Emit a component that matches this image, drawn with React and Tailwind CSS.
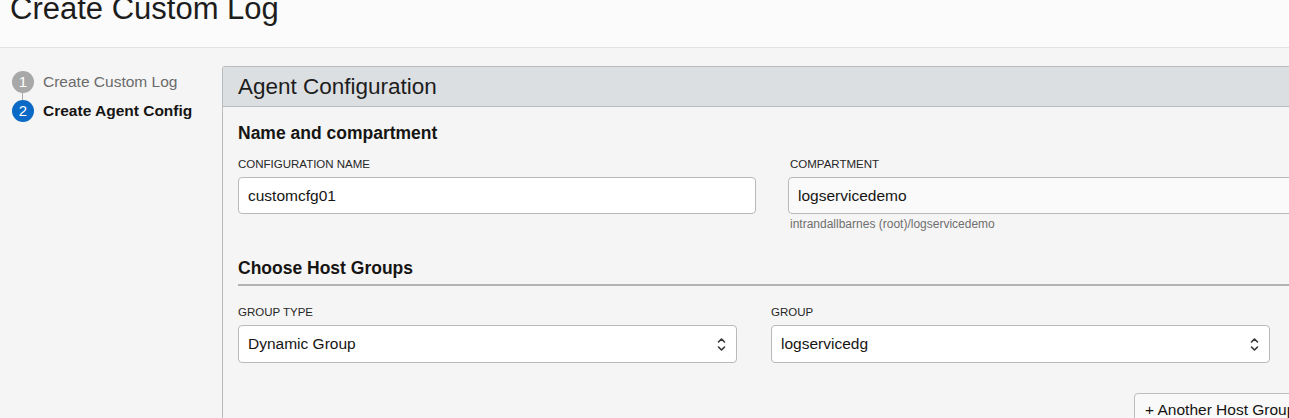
import React from 'react';

const Chevrons = () => (
  <svg width="9" height="15" viewBox="0 0 9 15" fill="none" stroke="#333" strokeWidth="1.6" strokeLinecap="round" strokeLinejoin="round">
    <path d="M1.5 5 L4.5 2 L7.5 5" />
    <path d="M1.5 10 L4.5 13 L7.5 10" />
  </svg>
);

const Label = ({ children }) => (
  <div className="text-[11.5px] leading-[14px] text-[#262626] uppercase mb-[6px]">{children}</div>
);

const Select = ({ value }) => (
  <div className="h-[38px] bg-white border border-[#b9b9b9] rounded-[4px] flex items-center justify-between pl-[9px] pr-[10px] text-[15.5px] text-[#161513]">
    <span>{value}</span>
    <Chevrons />
  </div>
);

const App = () => {
  const steps = [
    { n: 1, label: 'Create Custom Log', active: false },
    { n: 2, label: 'Create Agent Config', active: true },
  ];

  return (
    <div className="w-full h-[418px] overflow-hidden bg-[#f5f5f5] text-[#161513]" style={{ fontFamily: '"Liberation Sans", Arial, sans-serif' }}>
      {/* page header */}
      <div className="h-[48px] bg-[#fbfbfb] border-b border-[#e2e2e2] overflow-hidden">
        <h1 className="mt-[-7px] pl-[10px] text-[31px] leading-[31px] text-[#1d1d1d]">Create Custom Log</h1>
      </div>

      <div className="flex">
        {/* steps */}
        <div className="w-[222px] shrink-0 pt-[23px] pl-[12px]">
          {steps.map((s, i) => (
            <div key={s.n}>
              {i > 0 && <div className="ml-[10px] w-px h-[7px] bg-[#a9a9a9]"></div>}
              <div className="flex items-center gap-[9px] h-[22px]">
                <div
                  className={`w-[22px] h-[22px] rounded-full flex items-center justify-center text-white text-[15px] ${
                    s.active ? 'bg-[#0a6ac5]' : 'bg-[#a8a8a8]'
                  }`}
                >
                  {s.n}
                </div>
                <span className={`text-[15.5px] ${s.active ? 'font-bold text-[#161513]' : 'text-[#6b6b6b]'}`}>{s.label}</span>
              </div>
            </div>
          ))}
        </div>

        {/* panel */}
        <div className="mt-[18px] w-[1100px] shrink-0 border-l border-t border-[#b9bcbf] rounded-tl-[3px] h-[400px]">
          <div className="h-[40px] bg-[#dcdfe2] border-b border-[#b7bbbf] flex items-center pl-[15px] text-[22.5px] text-[#1d1d1d]">
            Agent Configuration
          </div>

          <div className="pl-[15px] pr-[16px]">
            <h2 className="pt-[16px] text-[17.5px] leading-[20px] font-bold">Name and compartment</h2>

            <div className="mt-[14px] flex gap-[32px]">
              <div className="w-[518px]">
                <Label>Configuration Name</Label>
                <div className="h-[37px] bg-white border border-[#b9b9b9] rounded-[4px] flex items-center pl-[9px] text-[15.5px]">
                  customcfg01
                </div>
              </div>
              <div className="w-[518px]">
                <div className="pl-[2px]"><Label>Compartment</Label></div>
                <div className="h-[37px] bg-[#fafafa] border border-[#b9b9b9] rounded-[4px] flex items-center pl-[9px] text-[15.5px]">
                  logservicedemo
                </div>
                <div className="mt-[3px] pl-[2px] text-[12px] leading-[14px] text-[#6f6f6f]">intrandallbarnes (root)/logservicedemo</div>
              </div>
            </div>

            <h2 className="mt-[27px] pb-[6px] text-[17.5px] leading-[20px] font-bold border-b-2 border-[#b3b3b3]">Choose Host Groups</h2>

            <div className="mt-[19px] flex gap-[34px]">
              <div className="w-[499px]">
                <Label>Group Type</Label>
                <Select value="Dynamic Group" />
              </div>
              <div className="w-[499px]">
                <Label>Group</Label>
                <Select value="logservicedg" />
              </div>
            </div>

            <div className="mt-[30px] flex justify-end">
              <button className="h-[32px] w-[172px] shrink-0 pl-[10px] bg-[#f9f9f9] border border-[#bdbdbd] rounded-[4px] text-[15.5px] leading-[18px] text-[#161513] flex items-start pt-[7px] whitespace-nowrap overflow-hidden">
                + Another Host Group
              </button>
            </div>
          </div>
        </div>
      </div>
    </div>
  );
};

export default App;
